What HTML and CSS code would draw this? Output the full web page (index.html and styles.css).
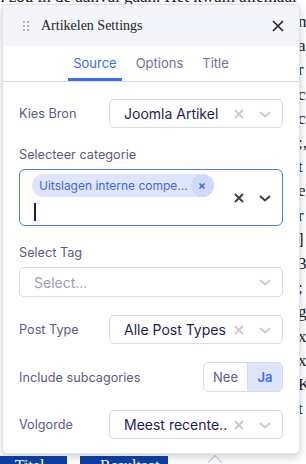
FILE: index.html
```html
<!DOCTYPE html>
<html lang="nl">

<head>
    <meta charset="UTF-8">
    <meta name="viewport" content="width=device-width, initial-scale=1.0">
    <title>Artikelen Settings</title>
    <link rel="stylesheet" href="styles.css">
</head>

<body>
    <!-- pagina achter het venster -->
    <div class="page">
        <p class="page-line">n zou in de aanval gaan. Het kwam allemaal</p>
        <div class="page-edge">m<br>a<br>r<br>c<br>c<br>;,<br>t<br>e:<br>r<br>]<br>3<br>;<br>g<br>x<br>x<br>K<br>t</div>
        <div class="page-btns">
            <span class="page-btn first">Titel</span>
            <span class="page-btn">Resultaat</span>
            <span class="page-caret"></span>
        </div>
    </div>

    <!-- settings venster -->
    <div class="dialog">
        <div class="dialog-head">
            <svg class="drag" width="8" height="12" viewBox="0 0 8 12">
                <circle cx="2" cy="2" r="1" />
                <circle cx="6" cy="2" r="1" />
                <circle cx="2" cy="6" r="1" />
                <circle cx="6" cy="6" r="1" />
                <circle cx="2" cy="10" r="1" />
                <circle cx="6" cy="10" r="1" />
            </svg>
            <span class="dialog-title">Artikelen Settings</span>
            <svg class="close" width="12" height="12" viewBox="0 0 12 12">
                <path d="M1 1L11 11M11 1L1 11" />
            </svg>
        </div>

        <ul class="tabs">
            <li class="on">Source</li>
            <li>Options</li>
            <li>Title</li>
        </ul>

        <div class="form">
            <div class="row">
                <span class="label">Kies Bron</span>
                <div class="select short">
                    <span class="value">Joomla Artikel</span>
                    <svg class="ic-x" width="12" height="12" viewBox="0 0 12 12"><path d="M2 2L10 10M10 2L2 10" /></svg>
                    <svg class="ic-down" width="14" height="10" viewBox="0 0 14 10"><path d="M2 3L7 7.5L12 3" /></svg>
                </div>
            </div>

            <div class="field">
                <span class="label">Selecteer categorie</span>
                <div class="select multi">
                    <div class="multi-body">
                        <span class="chip">Uitslagen interne compe...<i class="chip-x"><svg width="8" height="8" viewBox="0 0 8 8"><path d="M1.5 1.5L6.5 6.5M6.5 1.5L1.5 6.5" /></svg></i></span>
                        <span class="cursor"></span>
                    </div>
                    <svg class="ic-x dark" width="12" height="12" viewBox="0 0 12 12"><path d="M2 2L10 10M10 2L2 10" /></svg>
                    <svg class="ic-down dark" width="14" height="10" viewBox="0 0 14 10"><path d="M2 3L7 7.5L12 3" /></svg>
                </div>
            </div>

            <div class="field">
                <span class="label">Select Tag</span>
                <div class="select">
                    <span class="value placeholder">Select...</span>
                    <svg class="ic-down" width="14" height="10" viewBox="0 0 14 10"><path d="M2 3L7 7.5L12 3" /></svg>
                </div>
            </div>

            <div class="row">
                <span class="label">Post Type</span>
                <div class="select short">
                    <span class="value">Alle Post Types</span>
                    <svg class="ic-x" width="12" height="12" viewBox="0 0 12 12"><path d="M2 2L10 10M10 2L2 10" /></svg>
                    <svg class="ic-down" width="14" height="10" viewBox="0 0 14 10"><path d="M2 3L7 7.5L12 3" /></svg>
                </div>
            </div>

            <div class="row">
                <span class="label">Include subcagories</span>
                <div class="toggle">
                    <span>Nee</span>
                    <span class="on">Ja</span>
                </div>
            </div>

            <div class="row">
                <span class="label">Volgorde</span>
                <div class="select short">
                    <span class="value">Meest recente..</span>
                    <svg class="ic-x" width="12" height="12" viewBox="0 0 12 12"><path d="M2 2L10 10M10 2L2 10" /></svg>
                    <svg class="ic-down" width="14" height="10" viewBox="0 0 14 10"><path d="M2 3L7 7.5L12 3" /></svg>
                </div>
            </div>
        </div>
    </div>
</body>

</html>
```

FILE: styles.css
```css
/* reset */
* {
    margin: 0;
    box-sizing: border-box;
}

ul {
    padding: 0;
    list-style: none;
}

body {
    width: 306px;
    height: 464px;
    overflow: hidden;
    position: relative;
    background: #fff;
    font-family: "Liberation Serif", serif;
    color: #222;
}

/* pagina achter het venster */
.page {
    height: 100%;
    display: flex;
    flex-direction: column;
}

.page-line {
    margin: -13px 0 0 -4px;
    font-size: 17px;
    line-height: 20px;
    white-space: nowrap;
}

.page-edge {
    margin: 3px 0 0 298px;
    font-size: 17px;
    line-height: 24.2px;
}

.page-btns {
    display: flex;
    align-items: flex-start;
    margin-top: auto;
    height: 8px;
    flex-shrink: 0;
}

.page-btn {
    flex-shrink: 0;
    height: 22px;
    padding: 1px 0 0 20px;
    background: #0c3fa6;
    color: #fff;
    font-size: 16px;
    line-height: 18px;
    width: 88px;
    white-space: nowrap;
    overflow: hidden;
}

.page-btn.first {
    width: 67px;
    padding-left: 0;
    margin-right: 13px;
    text-indent: -8px;
    text-align: center;
}

.page-caret {
    flex-shrink: 0;
    width: 10px;
    height: 10px;
    margin: 1px 0 0 42px;
    border-left: 1px solid #c3c6cf;
    border-top: 1px solid #c3c6cf;
    transform: rotate(45deg);
}

/* settings venster */
.dialog {
    position: absolute;
    left: 2px;
    top: 4px;
    width: 298px;
    height: 450px;
    background: #fff;
    border: 1px solid #dfe1e8;
    border-radius: 5px;
    box-shadow: 0 3px 10px rgba(40, 45, 70, 0.22);
    overflow: hidden;
    font-family: Inter, "Noto Sans", sans-serif;
}

.dialog-head {
    height: 41px;
    display: flex;
    align-items: center;
    padding: 0 15px 0 19px;
    background: #f3f5fa;
}

.drag {
    fill: #9a9dc0;
}

.dialog-title {
    flex: 1;
    margin-left: 11px;
    font-family: "Liberation Serif", serif;
    font-size: 14px;
    color: #1d1d26;
}

.close {
    stroke: #222;
    stroke-width: 1.6;
}

.tabs {
    height: 36px;
    display: flex;
    justify-content: center;
    gap: 9px;
    border-bottom: 1px solid #d9dbe4;
}

.tabs li {
    padding: 0 5px;
    line-height: 34px;
    font-size: 13px;
    color: #6e72a0;
    border-bottom: 3px solid transparent;
}

.tabs li.on {
    color: #3a6ef2;
    border-bottom-color: #3a6ef2;
}

.form {
    display: flex;
    flex-direction: column;
    gap: 18px;
    padding: 17px 16px 0 16px;
}

.label {
    font-size: 12.7px;
    line-height: 17px;
    color: #585c8a;
}

.row {
    display: flex;
    align-items: center;
    justify-content: space-between;
}

.field {
    display: flex;
    flex-direction: column;
    gap: 6px;
}

.select {
    height: 30px;
    display: flex;
    align-items: center;
    padding: 0 10px 0 14px;
    border: 1px solid #d9dbe6;
    border-radius: 5px;
}

.select.short {
    width: 174px;
    height: 29px;
}

.value {
    flex: 1;
    font-size: 14px;
    color: #1a1e5a;
    white-space: nowrap;
}

.value.placeholder {
    color: #9b9dbd;
}

.ic-x {
    stroke: #c9cad3;
    stroke-width: 1.8;
    margin-right: 13px;
}

.ic-down {
    fill: none;
    stroke: #c9cad3;
    stroke-width: 1.8;
}

.ic-x.dark,
.ic-down.dark {
    stroke: #3c3d48;
    stroke-width: 2;
}

.select.multi {
    height: 57px;
    padding: 0 10px 0 12px;
    border-color: #4d7cf0;
    border-radius: 6px;
}

.multi-body {
    flex: 1;
    display: flex;
    flex-direction: column;
    align-items: flex-start;
    gap: 6px;
}

.chip {
    display: flex;
    align-items: center;
    height: 23px;
    padding-left: 7px;
    background: #dfe6fc;
    border-radius: 12px;
    font-size: 12px;
    color: #3e66e8;
}

.chip-x {
    width: 23px;
    height: 23px;
    margin-left: 3px;
    display: flex;
    align-items: center;
    justify-content: center;
    background: #cfdafa;
    border-radius: 50%;
}

.chip-x svg {
    stroke: #3e66e8;
    stroke-width: 1.6;
}

.cursor {
    width: 1.5px;
    height: 18px;
    margin-left: 2px;
    background: #1a1e5a;
}

.toggle {
    display: flex;
    height: 30px;
    border: 1px solid #d9dbe6;
    border-radius: 5px;
    overflow: hidden;
    font-size: 13px;
}

.toggle span {
    width: 43px;
    display: flex;
    align-items: center;
    justify-content: center;
    color: #585c8a;
}

.toggle span.on {
    width: 35px;
    border-left: 1px solid #d9dbe6;
    background: #dce5fc;
    color: #3a6ef2;
    font-weight: 600;
}
```
